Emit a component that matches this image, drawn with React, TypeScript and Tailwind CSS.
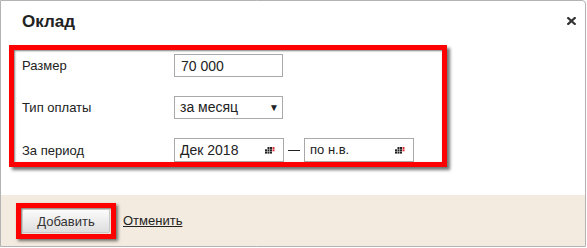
import { useState } from 'react';

// small dotted calendar glyph used in the period pickers
function CalendarDots() {
  const cells = [
    [0, 1, 1, 2],
    [1, 1, 1, 2],
    [1, 1, 1, 0],
  ];
  return (
    <svg width="10" height="7" viewBox="0 0 10 7" className="block">
      {cells.map((row, r) =>
        row.map((c, i) =>
          c ? (
            <rect
              key={`${r}-${i}`}
              x={i * 2.5}
              y={r * 2.3}
              width="2"
              height="2"
              fill={c === 2 ? '#e0323c' : '#222'}
            />
          ) : null
        )
      )}
    </svg>
  );
}

export default function App() {
  const [amount, setAmount] = useState('70 000');

  return (
    <div className="w-[587px] h-[248px] bg-white font-['Liberation_Sans',Arial,sans-serif] text-[#222]">
      <div className="relative h-[247px] w-[586px] border border-[#b3b3b3] rounded-tr-[4px] flex flex-col overflow-hidden">
        {/* header */}
        <div className="h-[44px] pl-[21px] pt-[11px]">
          <h2 className="text-[17px] font-bold leading-[20px] text-[#222]">Оклад</h2>
        </div>
        <button className="absolute right-[9px] top-[16px] leading-none">
          <svg width="9" height="8" viewBox="0 0 9 8" className="block">
            <path d="M1.2 1 L7.8 7 M7.8 1 L1.2 7" stroke="#333" strokeWidth="2.2" strokeLinecap="square" />
          </svg>
        </button>

        {/* highlighted form */}
        <div className="pl-[8px]">
          <div className="w-[438px] h-[122px] border-[5px] border-[#ff0000] shadow-[3px_3px_3px_rgba(0,0,0,0.55),inset_1px_1px_2px_rgba(0,0,0,0.5)] pl-[8px] pt-[4px] flex flex-col gap-[19px] text-[13px]">
            <div className="flex items-start h-[23px]">
              <span className="w-[152px] pt-[2px] text-[#222]">Размер</span>
              <input
                value={amount}
                onChange={(e) => setAmount(e.target.value)}
                className="w-[109px] h-[23px] border border-[#a9a9a9] px-[6px] text-[14px] text-[#222] outline-none"
              />
            </div>
            <div className="flex items-start h-[23px]">
              <span className="w-[152px] pt-[2px] text-[#222]">Тип оплаты</span>
              <div className="w-[109px] h-[23px] border border-[#a9a9a9] pl-[5px] pr-[3px] flex items-center justify-between text-[14px]">
                <span>за месяц</span>
                <span className="text-[10px]">▼</span>
              </div>
            </div>
            <div className="flex items-start h-[24px]">
              <span className="w-[152px] pt-[3px] text-[#222]">За период</span>
              <div className="w-[110px] h-[24px] border border-[#a9a9a9] pl-[5px] pr-[8px] flex items-center justify-between text-[14px]">
                <span>Дек 2018</span>
                <CalendarDots />
              </div>
              <span className="w-[20px] h-[24px] flex items-center justify-center">
                <span className="block w-[12px] h-px bg-[#222]" />
              </span>
              <div className="w-[110px] h-[24px] border border-[#a9a9a9] pl-[5px] pr-[8px] flex items-center justify-between text-[13px]">
                <span>по н.в.</span>
                <CalendarDots />
              </div>
            </div>
          </div>
        </div>

        {/* footer */}
        <div className="mt-auto h-[51px] bg-[#f3ebdf] pl-[15px] flex items-center gap-[7px]">
          <div className="w-[100px] h-[36px] border-[5px] border-[#ff0000] shadow-[2px_2px_3px_rgba(0,0,0,0.55),inset_1px_1px_2px_rgba(0,0,0,0.5)] p-[1px]">
            <button className="w-full h-full bg-gradient-to-b from-[#fbfbfb] to-[#dedede] border border-[#c8c8c8] rounded-[2px] text-[13px] text-[#333]">
              Добавить
            </button>
          </div>
          <a href="#" className="text-[13px] text-[#222] underline">
            Отменить
          </a>
        </div>
      </div>
    </div>
  );
}
